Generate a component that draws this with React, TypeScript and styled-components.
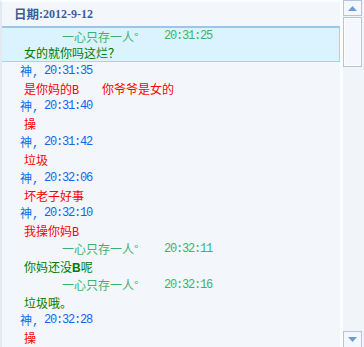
import React from 'react';
import styled, { createGlobalStyle } from 'styled-components';

const GlobalStyle = createGlobalStyle`
    html, body {
        margin: 0;
        padding: 0;
        overflow: hidden;
        background: #f3f7fb;
    }
`;

const Window = styled.div`
    display: flex;
    width: 364px;
    height: 347px;
    overflow: hidden;
    background: #f3f7fb;
    font-family: 'Noto Sans CJK SC', 'Noto Sans', sans-serif;
    font-size: 12px;
`;

const Content = styled.div`
    flex: 1;
    display: flex;
    flex-direction: column;
    border-left: 2px solid #e3e9f0;
    border-top: 2px solid #fbfdfe;
    overflow: hidden;
`;

const DateHeader = styled.div`
    height: 26px;
    display: flex;
    align-items: center;
    padding-left: 12px;
    color: #3b5d9c;
    font-weight: bold;
`;

const DateLabel = styled.span`
    font-size: 12.5px;
`;

const DateValue = styled.span`
    font-family: 'Liberation Serif', serif;
    font-size: 12px;
    padding-top: 1px;
`;

const Message = styled.div<{ $selected?: boolean }>`
    display: flex;
    flex-direction: column;
    margin-left: ${(p) => (p.$selected ? '-1px' : '0')};
    border: ${(p) => (p.$selected ? '1px solid #a9d2ee' : 'none')};
    border-top: ${(p) => (p.$selected ? '2px solid #9cc6e8' : 'none')};
    background: ${(p) => (p.$selected ? '#dbf3fe' : 'transparent')};
`;

const Meta = styled.div<{ $other?: boolean; $tight?: boolean }>`
    display: flex;
    align-items: center;
    height: ${(p) => (p.$tight ? '17px' : '18px')};
    padding-left: ${(p) => (p.$other ? '60px' : '18px')};
    color: ${(p) => (p.$other ? '#3cb36c' : '#1166ee')};
    white-space: pre;
`;

const Name = styled.span<{ $other?: boolean }>`
    width: ${(p) => (p.$other ? '102px' : 'auto')};
`;

const Latin = styled.span`
    font-family: 'Liberation Mono', monospace;
    font-size: 12px;
    letter-spacing: -1.2px;
`;

const Body = styled.div<{ $color: string; $tight?: boolean }>`
    height: ${(p) => (p.$tight ? '16px' : '17.7px')};
    line-height: ${(p) => (p.$tight ? '16px' : '17.7px')};
    padding-left: 22px;
    color: ${(p) => p.$color};
    white-space: pre;
`;

const Bold = styled.b`
    font-family: 'Liberation Sans', sans-serif;
`;

const Scrollbar = styled.div`
    width: 19px;
    display: flex;
    flex-direction: column;
    border-left: 3px solid #fbfdfe;
    background: #f1f5f9;
    padding-right: 2px;
`;

const ArrowButton = styled.div<{ $down?: boolean }>`
    height: ${(p) => (p.$down ? '15px' : '14px')};
    display: flex;
    align-items: center;
    justify-content: center;
    border: 1px solid #b7c3d7;
    background: #f4f8fc;
    margin-top: ${(p) => (p.$down ? 'auto' : '0')};
    border-bottom-width: ${(p) => (p.$down ? '0' : '1px')};
`;

const Thumb = styled.div`
    margin-top: 1px;
    height: 48px;
    border: 1px solid #b7c3d7;
    box-shadow: inset 0 0 0 1px #fbfdfe;
    background: #f4f8fc;
`;

const Arrow = ({ down }: { down?: boolean }) => (
    <svg width="9" height="5" viewBox="0 0 9 5">
        <path d={down ? 'M0 0 H9 L4.5 5 Z' : 'M0 5 H9 L4.5 0 Z'} fill="#6b9dd4" />
    </svg>
);

const RED = '#ff0000';
const GREEN = '#007a00';

type Entry = {
    other?: boolean;
    time: string;
    body: React.ReactNode;
};

const entries: Entry[] = [
    { time: '20:31:35', body: <>是你妈的<Latin>B    </Latin>你爷爷是女的</> },
    { time: '20:31:40', body: '操' },
    { time: '20:31:42', body: '垃圾' },
    { time: '20:32:06', body: '坏老子好事' },
    { time: '20:32:10', body: <>我操你妈<Latin>B</Latin></> },
    { other: true, time: '20:32:11', body: <>你妈还没<Bold>B</Bold>呢</> },
    { other: true, time: '20:32:16', body: '垃圾哦。' },
    { time: '20:32:28', body: '操' },
];

const MetaLine = ({ other, time, tight }: { other?: boolean; time: string; tight?: boolean }) => (
    <Meta $other={other} $tight={tight}>
        {other ? (
            <Name $other>一心只存一人°</Name>
        ) : (
            <Name>
                神<Latin>, </Latin>
            </Name>
        )}
        <Latin>{time}</Latin>
    </Meta>
);

const App = () => (
    <Window>
        <GlobalStyle />
        <Content>
            <DateHeader>
                <DateLabel>日期</DateLabel>
                <DateValue>:2012-9-12</DateValue>
            </DateHeader>
            <Message $selected>
                <MetaLine other time="20:31:25" tight />
                <Body $color={GREEN} $tight>
                    女的就你吗这烂？
                </Body>
            </Message>
            {entries.map((entry) => (
                <Message key={entry.time}>
                    <MetaLine other={entry.other} time={entry.time} />
                    <Body $color={entry.other ? GREEN : RED}>{entry.body}</Body>
                </Message>
            ))}
        </Content>
        <Scrollbar>
            <ArrowButton>
                <Arrow />
            </ArrowButton>
            <Thumb />
            <ArrowButton $down>
                <Arrow down />
            </ArrowButton>
        </Scrollbar>
    </Window>
);

export default App;
